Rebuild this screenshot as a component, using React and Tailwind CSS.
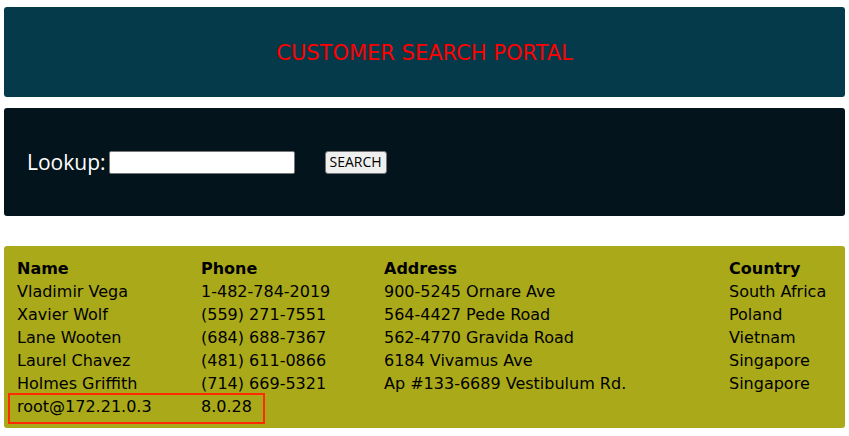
import React from 'react'

const customers = [
  { name: 'Vladimir Vega', phone: '1-482-784-2019', address: '900-5245 Ornare Ave', country: 'South Africa' },
  { name: 'Xavier Wolf', phone: '(559) 271-7551', address: '564-4427 Pede Road', country: 'Poland' },
  { name: 'Lane Wooten', phone: '(684) 688-7367', address: '562-4770 Gravida Road', country: 'Vietnam' },
  { name: 'Laurel Chavez', phone: '(481) 611-0866', address: '6184 Vivamus Ave', country: 'Singapore' },
  { name: 'Holmes Griffith', phone: '(714) 669-5321', address: 'Ap #133-6689 Vestibulum Rd.', country: 'Singapore' },
  { name: 'root@172.21.0.3', phone: '8.0.28', address: '', country: '' },
]

const App = () => {
  return (
    <div className="w-[849px] h-[436px] bg-white px-[4px] pt-[7px] font-['DejaVu_Sans',sans-serif]">
      {/* Header */}
      <div className="h-[90px] rounded-[3px] bg-[#053a4a] flex items-center justify-center pt-[2px]">
        <h1 className="text-[21px] text-[#ff0000] leading-none">CUSTOMER SEARCH PORTAL</h1>
      </div>

      {/* Search form */}
      <div className="mt-[11px] h-[108px] rounded-[3px] bg-[#03141c] flex items-center pl-[23px]">
        <label className="text-[21px] text-white font-['Open_Sans',sans-serif] pt-[2px]">Lookup:</label>
        <input
          type="text"
          className="ml-[3px] w-[186px] h-[23px] bg-white rounded-[2px] border border-[#767676]"
        />
        <button className="ml-[30px] w-[62px] h-[23px] bg-[#efefef] border border-[#767676] rounded-[3px] text-[14px] text-black font-['Open_Sans',sans-serif] leading-none">
          SEARCH
        </button>
      </div>

      {/* Results */}
      <div className="mt-[30px] h-[182px] rounded-[3px] bg-[#aaa91a] pt-[11px] pl-[13px] text-[16px] text-black">
        <div className="relative">
          <div className="grid grid-cols-[184px_183px_345px_1fr] h-[23px] items-center font-bold">
            <span>Name</span>
            <span>Phone</span>
            <span>Address</span>
            <span>Country</span>
          </div>
          {customers.map((c, i) => (
            <div key={i} className="grid grid-cols-[184px_183px_345px_1fr] h-[23px] items-center whitespace-nowrap">
              <span>{c.name}</span>
              <span>{c.phone}</span>
              <span>{c.address}</span>
              <span>{c.country}</span>
            </div>
          ))}
          <div className="absolute left-[-9px] top-[136px] w-[257px] h-[31px] border-2 border-[#ff2a00]"></div>
        </div>
      </div>
    </div>
  )
}

export default App
